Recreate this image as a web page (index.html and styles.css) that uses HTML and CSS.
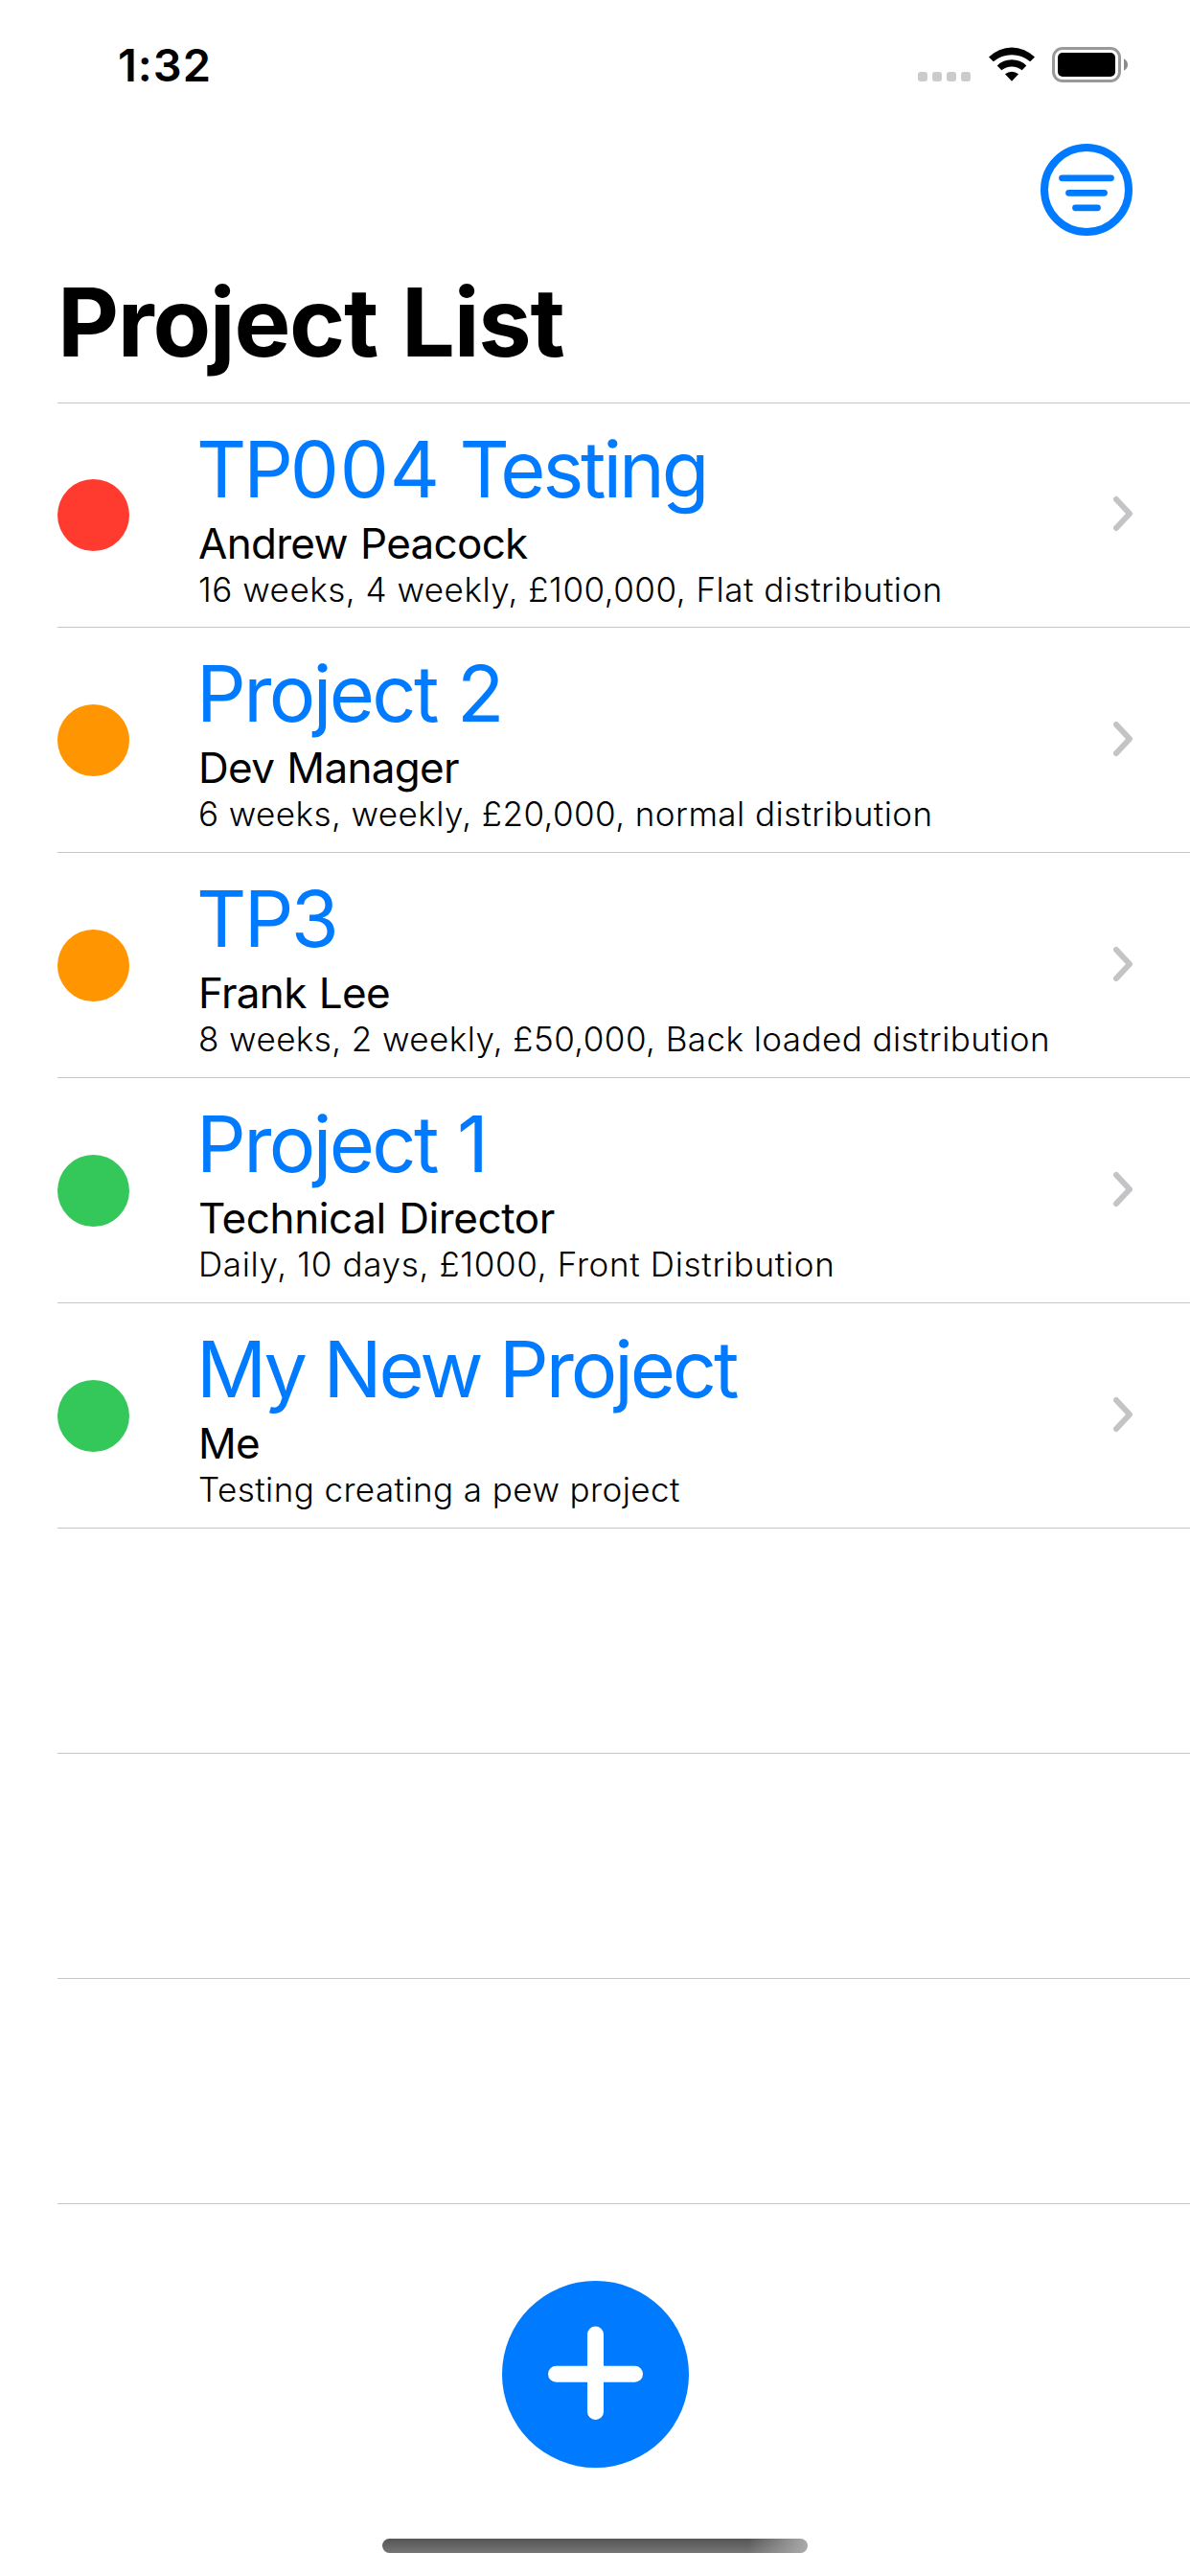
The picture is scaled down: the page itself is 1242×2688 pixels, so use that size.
FILE: index.html
```html
<!DOCTYPE html>
<html lang="en">
<head>
<meta charset="utf-8">
<title>Project List</title>
<link rel="stylesheet" href="styles.css">
</head>
<body>
<div class="screen">
  <header class="status">
    <span class="time">1:32</span>
    <div class="indicators">
      <svg class="signal" width="55" height="10" fill="#cbcbcb"><rect width="10" height="10" rx="3"/><rect x="15" width="10" height="10" rx="3"/><rect x="30" width="10" height="10" rx="3"/><rect x="45" width="10" height="10" rx="3"/></svg>
      <svg class="wifi" width="48" height="36" viewBox="0 0 48 36"><path d="M0 10.5A34 34 0 0 1 48 10.5L43.2 15.3A29.5 29.5 0 0 0 4.8 15.3ZM8.7 19.6A21.5 21.5 0 0 1 39.3 19.6L34.7 24.2A17 17 0 0 0 13.3 24.2ZM17 28.3A10.5 10.5 0 0 1 31 28.3L24 35.7Z"/></svg>
      <svg class="battery" width="80" height="37" viewBox="0 0 80 37"><rect x="1.5" y="1.5" width="69" height="34" rx="9.5" fill="none" stroke="#999" stroke-width="3"/><rect x="6" y="6" width="60" height="25" rx="5"/><path d="M75 12.3Q79 14.5 79 18.5T75 24.7Z" fill="#8a8a8a"/></svg>
    </div>
  </header>
  <nav class="toolbar">
    <svg width="96" height="96" viewBox="0 0 96 96" fill="none" stroke="#007aff" stroke-linecap="round"><circle cx="48" cy="48" r="44" stroke-width="8"/><path d="M22.5 35.8H73.5M29.5 51.3H66.5M36.5 66.8H59.5" stroke-width="6.8"/></svg>
  </nav>
  <h1 class="heading">Project List</h1>
  <main class="list">
    <article class="row">
      <i class="dot red"></i>
      <div class="info"><h2 class="name">TP<span class="digits">004</span> Testing</h2><p class="owner">Andrew Peacock</p><p class="detail">16 weeks, 4 weekly, £100,000, Flat distribution</p></div>
      <svg class="chevron" width="22" height="38"><path d="M4 4L18 19L4 34"/></svg>
    </article>
    <article class="row">
      <i class="dot orange"></i>
      <div class="info"><h2 class="name short">Project 2</h2><p class="owner">Dev Manager</p><p class="detail tight">6 weeks, weekly, £20,000, normal distribution</p></div>
      <svg class="chevron" width="22" height="38"><path d="M4 4L18 19L4 34"/></svg>
    </article>
    <article class="row">
      <i class="dot orange"></i>
      <div class="info"><h2 class="name short">TP3</h2><p class="owner">Frank Lee</p><p class="detail tight">8 weeks, 2 weekly, £50,000, Back loaded distribution</p></div>
      <svg class="chevron" width="22" height="38"><path d="M4 4L18 19L4 34"/></svg>
    </article>
    <article class="row">
      <i class="dot green"></i>
      <div class="info"><h2 class="name short">Project 1</h2><p class="owner long">Technical Director</p><p class="detail loose">Daily, 10 days, £1000, Front Distribution</p></div>
      <svg class="chevron" width="22" height="38"><path d="M4 4L18 19L4 34"/></svg>
    </article>
    <article class="row">
      <i class="dot green"></i>
      <div class="info"><h2 class="name">My New Project</h2><p class="owner">Me</p><p class="detail tight">Testing creating a pew project</p></div>
      <svg class="chevron" width="22" height="38"><path d="M4 4L18 19L4 34"/></svg>
    </article>
    <div class="row"></div>
    <div class="row"></div>
    <div class="row"></div>
  </main>
  <footer class="footer">
    <svg class="add" width="195" height="195" viewBox="0 0 195 195"><circle cx="97.5" cy="97.5" r="97.5" fill="#007aff"/><path d="M56.5 97.2H138.5M97.5 56V136.5" stroke="#fff" stroke-width="17" stroke-linecap="round"/></svg>
    <div class="home"></div>
  </footer>
</div>
</body>
</html>
```
FILE: styles.css
```css
* { box-sizing: border-box; margin: 0; padding: 0; }
body { background: #fff; color: #000; font-family: Inter, "Liberation Sans", sans-serif; }
.screen { width: 1242px; height: 2688px; display: flex; flex-direction: column; overflow: hidden; }
svg { display: block; flex: none; }

.status { height: 150px; padding: 38px 64px 0 123px; display: flex; justify-content: space-between; align-items: flex-start; }
.time { font-size: 47px; font-weight: 600; line-height: 60px; letter-spacing: 1px; }
.indicators { display: flex; align-items: flex-start; padding-top: 11px; }
.signal { margin-top: 26px; }
.wifi { margin-left: 19px; }
.battery { margin-left: 18px; }

.toolbar { height: 96px; padding-right: 60px; display: flex; justify-content: flex-end; }
.heading { height: 174px; padding: 30px 0 0 60px; font-size: 99px; font-weight: 700; line-height: 120px; letter-spacing: -1.3px; word-spacing: 3px; white-space: nowrap; }

.list { margin-left: 60px; border-top: 1px solid #c6c6c8; }
.row { height: 235px; padding-right: 59px; border-bottom: 1px solid #c6c6c8; display: flex; align-items: center; }
.row:first-child { height: 234px; }
.dot { width: 75px; height: 75px; border-radius: 50%; flex: none; }
.red { background: #ff3b30; }
.orange { background: #ff9500; }
.green { background: #34c759; }
.info { flex: 1; margin-left: 72px; white-space: nowrap; }
.name { margin-left: -2px; color: #007aff; font-size: 81px; font-weight: 400; line-height: 100px; letter-spacing: -3.1px; }
.short { letter-spacing: -2.6px; word-spacing: 1px; }
.digits { letter-spacing: 0.8px; }
.owner { font-size: 44px; line-height: 55px; letter-spacing: -0.7px; word-spacing: 1.5px; }
.long { letter-spacing: -0.4px; }
.detail { margin-top: -1px; font-size: 35px; font-weight: 300; line-height: 42px; letter-spacing: 0.51px; }
.tight { letter-spacing: 0.43px; }
.loose { letter-spacing: 0.67px; }
.chevron { margin-top: -3px; fill: none; stroke: #c4c4c6; stroke-width: 6; stroke-linecap: round; stroke-linejoin: round; }

.footer { flex: 1; padding-top: 80px; display: flex; flex-direction: column; align-items: center; }
.home { width: 444px; height: 15px; margin-top: 74px; border-radius: 8px; background: linear-gradient(90deg, transparent 86%, #aaa 100%), linear-gradient(#555, #757575); }
```
